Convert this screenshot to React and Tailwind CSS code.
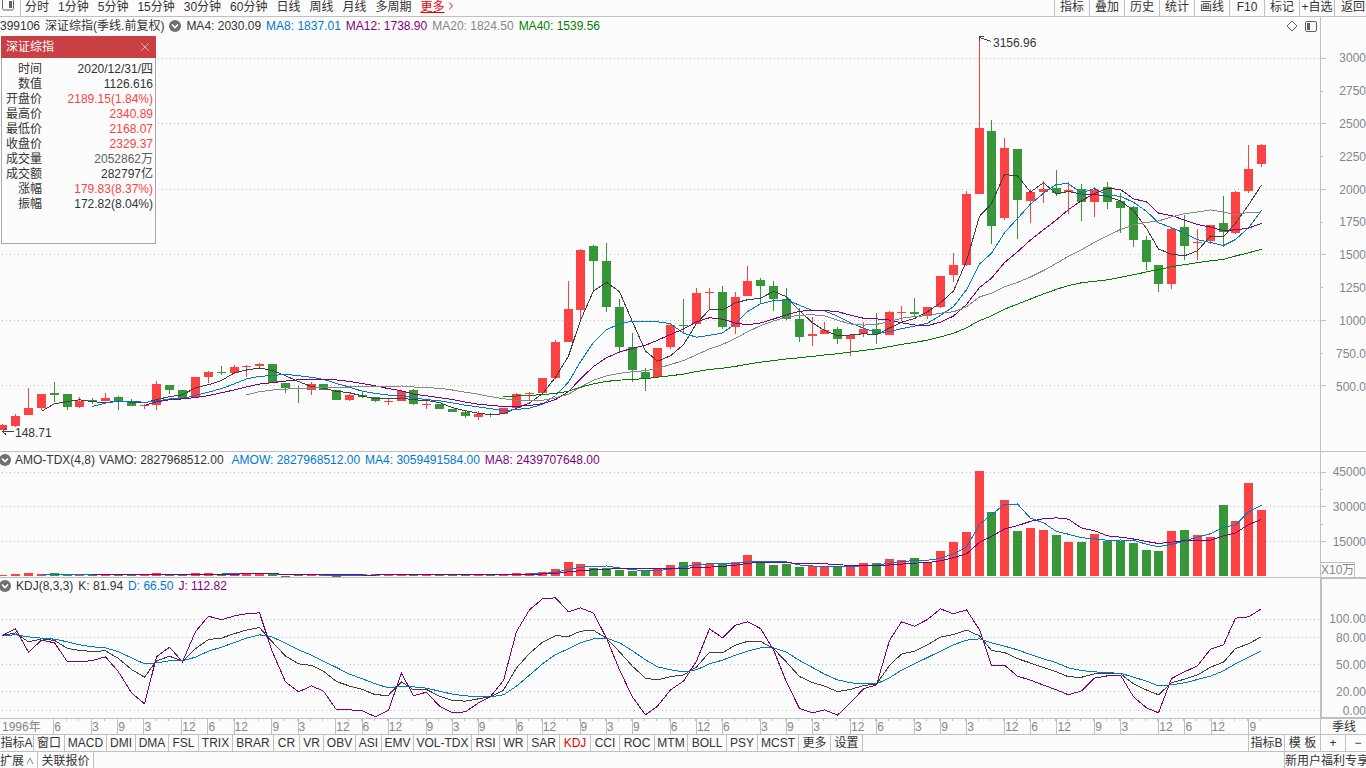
import React from "react";
import { ChevronRight, X } from "lucide-react";

const RED = "#fc4242";
const GREEN = "#379637";
const BLUE = "#0078d0";
const PURPLE = "#800080";
const DARK = "#404040";
const GRAY = "#868686";
const LINE = "#c0c0c0";

const PLOT_W = 1320;

// one row per quarter: direction, body top, body bottom, high, low
const candles = [
  ["r", 425, 430, 424, 430], ["r", 416, 426, 414, 427], ["r", 408, 415, 388, 415], ["r", 394, 408, 394, 410],
  ["g", 393, 395, 382, 402], ["g", 394, 407, 394, 410], ["r", 401, 407, 397, 408], ["g", 400, 402, 398, 404],
  ["r", 398, 401, 393, 401], ["g", 397, 401, 396, 410], ["g", 401, 406, 399, 406], ["r", 405, 406, 404, 409],
  ["r", 384, 405, 381, 410], ["g", 385, 390, 385, 394], ["g", 390, 398, 390, 398], ["r", 377, 397, 377, 398],
  ["r", 372, 377, 371, 383], ["g", 372, 373, 366, 375], ["r", 367, 373, 365, 374], ["r", 366, 367, 365, 377],
  ["r", 364, 366, 363, 368], ["g", 364, 383, 364, 383], ["g", 383, 388, 383, 393], ["g", 388, 389, 386, 403],
  ["r", 384, 390, 382, 395], ["g", 384, 390, 384, 390], ["g", 390, 400, 390, 400], ["r", 395, 400, 394, 401],
  ["g", 395, 397, 391, 398], ["g", 397, 401, 397, 402], ["r", 401, 402, 399, 405], ["r", 391, 401, 390, 401],
  ["g", 390, 404, 389, 405], ["r", 404, 405, 400, 409], ["g", 404, 409, 404, 409], ["g", 409, 412, 409, 412],
  ["g", 412, 416, 410, 418], ["r", 414, 417, 411, 420], ["g", 414, 415, 413, 417], ["r", 408, 414, 408, 414],
  ["r", 394, 408, 393, 408], ["r", 393, 394, 392, 401], ["r", 378, 393, 378, 393], ["r", 342, 378, 340, 379],
  ["r", 309, 342, 281, 342], ["r", 250, 310, 249, 320], ["g", 246, 261, 245, 292], ["g", 261, 307, 243, 312],
  ["g", 307, 347, 299, 351], ["g", 347, 370, 333, 382], ["g", 372, 378, 368, 391], ["r", 348, 377, 348, 377],
  ["r", 325, 347, 324, 349], ["g", 325, 326, 299, 333], ["r", 293, 324, 288, 324], ["r", 292, 293, 288, 310],
  ["g", 292, 327, 286, 329], ["r", 297, 327, 292, 334], ["r", 281, 296, 266, 296], ["g", 280, 286, 278, 303],
  ["g", 286, 299, 281, 311], ["g", 299, 319, 288, 320], ["g", 319, 337, 308, 342], ["r", 334, 336, 317, 346],
  ["r", 330, 334, 322, 334], ["g", 329, 339, 327, 344], ["r", 335, 339, 334, 356], ["r", 329, 334, 322, 337],
  ["g", 329, 334, 313, 344], ["r", 312, 335, 311, 335], ["r", 312, 313, 306, 321], ["g", 312, 314, 298, 317],
  ["r", 307, 316, 307, 319], ["r", 276, 307, 276, 308], ["r", 265, 275, 253, 282], ["r", 194, 265, 191, 266],
  ["r", 128, 194, 37, 194], ["g", 131, 226, 120, 244], ["r", 148, 218, 138, 220], ["g", 149, 200, 149, 239],
  ["r", 192, 201, 190, 223], ["r", 189, 192, 181, 203], ["g", 188, 193, 170, 196], ["r", 190, 192, 182, 214],
  ["g", 189, 202, 184, 221], ["r", 190, 202, 187, 217], ["g", 187, 202, 182, 209], ["g", 201, 208, 193, 233],
  ["g", 207, 240, 206, 247], ["g", 240, 262, 236, 270], ["g", 265, 284, 265, 292], ["r", 229, 284, 227, 289],
  ["g", 227, 246, 215, 260], ["r", 242, 243, 229, 260], ["r", 225, 241, 225, 244], ["g", 223, 232, 196, 247],
  ["r", 192, 233, 191, 234], ["r", 169, 191, 145, 193], ["r", 145, 164, 144, 167],
];

const volumes = [
  575, 574, 573, 574, 573, 574, 574, 574, 574, 574, 574, 575, 573, 574, 574, 573, 573, 574, 573, 573,
  573, 574, 576, 574, 574, 574, 576, 574, 574, 574, 574, 574, 574, 574, 574, 574, 574, 574, 574, 574,
  573, 573, 572, 569, 562, 564, 568, 568, 570, 571, 571, 568, 565, 562, 562, 564, 564, 562, 555, 562,
  565, 564, 567, 566, 566, 566, 566, 563, 563, 559, 560, 558, 562, 551, 542, 532, 471, 512, 500, 531,
  528, 530, 535, 542, 542, 534, 541, 541, 543, 550, 551, 531, 530, 535, 537, 505, 521, 483, 510,
];

// D and J in thirds of a pixel, K follows from J = 3K - 2D
const kdjJ = [
  555, 535, 605, 569, 577, 634, 634, 630, 619, 664, 727, 760, 619, 590, 634, 543, 497, 508, 496, 490,
  487, 605, 694, 724, 706, 722, 778, 778, 781, 799, 779, 668, 736, 725, 767, 787, 784, 757, 738, 690,
  543, 478, 445, 442, 484, 472, 488, 563, 658, 740, 793, 767, 718, 692, 632, 535, 562, 524, 514, 534,
  598, 695, 774, 787, 778, 794, 757, 715, 703, 570, 514, 527, 507, 475, 490, 478, 538, 646, 644, 677,
  689, 704, 718, 733, 721, 683, 676, 674, 739, 772, 787, 684, 664, 646, 596, 583, 503, 499, 475,
];
const kdjD = [
  555, 553, 559, 563, 566, 574, 583, 589, 592, 604, 622, 640, 637, 631, 631, 620, 602, 590, 576, 563,
  553, 560, 578, 598, 614, 632, 651, 671, 685, 700, 712, 707, 709, 713, 722, 731, 736, 739, 739, 733,
  707, 674, 640, 612, 595, 577, 565, 563, 577, 601, 628, 649, 658, 664, 658, 640, 629, 614, 602, 592,
  592, 605, 630, 651, 671, 688, 697, 700, 700, 682, 659, 640, 621, 602, 583, 569, 565, 577, 587, 598,
  612, 625, 637, 652, 660, 664, 667, 668, 680, 692, 706, 703, 697, 687, 677, 661, 640, 620, 601,
];
const kdjK = kdjJ.map((j, i) => (j + 2 * kdjD[i]) / 3);

const xAt = (i) => Math.floor(2.86 + 12.8448 * i);

const closes = candles.map(([dir, top, bottom]) => (dir === "r" ? top : bottom));

function average(values, n) {
  return values.map((_, i) =>
    i < n - 1 ? null : values.slice(i - n + 1, i + 1).reduce((a, b) => a + b, 0) / n
  );
}

function points(values) {
  return values
    .map((v, i) => (v === null ? null : `${xAt(i) + 0.5},${v + 0.5}`))
    .filter(Boolean)
    .join(" ");
}

function Curve({ values, color }) {
  return <polyline points={points(values)} fill="none" stroke={color} strokeWidth="1" />;
}

function GridLines({ rows }) {
  return rows.map((y) => (
    <line key={y} x1="2" x2={PLOT_W} y1={y + 0.5} y2={y + 0.5} stroke={LINE} strokeDasharray="1 3" />
  ));
}

function Plot({ top, height, className, children }) {
  return (
    <svg
      className={`block w-full ${className}`}
      viewBox={`0 ${top} ${PLOT_W} ${height}`}
      preserveAspectRatio="none"
      shapeRendering="crispEdges"
      aria-hidden="true"
    >
      {children}
    </svg>
  );
}

function AxisTicks({ top, height, major, minor, className }) {
  return (
    <svg className={`absolute left-0 top-0 w-[6px] ${className}`} viewBox={`0 ${top} 6 ${height}`} shapeRendering="crispEdges">
      {major.map((y) => <rect key={y} x="0" y={y} width="5" height="1" fill={LINE} />)}
      {minor.map((y) => <rect key={y} x="0" y={y} width="2" height="1" fill={LINE} />)}
    </svg>
  );
}

function Toggle({ label }) {
  return (
    <button aria-label={label} className="shrink-0">
      <svg className="block h-3 w-3" viewBox="0 0 12 12">
        <circle cx="6" cy="6" r="6" fill="#707070" />
        <path d="M3 4.5 6 7.5 9 4.5" fill="none" stroke="#fff" strokeWidth="1.6" />
      </svg>
    </button>
  );
}

const periods = ["分时", "1分钟", "5分钟", "15分钟", "30分钟", "60分钟", "日线", "周线", "月线", "多周期"];
const tools = ["指标", "叠加", "历史", "统计", "画线", "F10", "标记", "+自选"];

function Toolbar() {
  return (
    <header className="flex h-[17px] items-start overflow-hidden border-b border-[#c0c0c0] leading-[14px]">
      <button aria-label="侧栏" className="flex h-4 w-[21px] shrink-0 items-start border-r border-[#c0c0c0] pl-[2px]">
        <svg className="block h-[11px] w-3" viewBox="0 0 12 11">
          <rect x="0.5" y="-1" width="11" height="11" rx="1.5" fill="none" stroke="#606060" />
          <rect x="7" y="1" width="3" height="7" fill="#606060" />
        </svg>
      </button>
      <nav className="ml-1 flex gap-[9px] whitespace-nowrap">
        {periods.map((p) => <button key={p}>{p}</button>)}
        <button className="flex text-[#e60000]">
          <span className="underline underline-offset-1">更多</span>
          <ChevronRight className="h-3 w-3" strokeWidth={2} />
        </button>
      </nav>
      <div className="ml-auto flex h-4 items-start whitespace-nowrap">
        {tools.map((t) => (
          <button key={t} className="flex h-4 w-[35px] items-start justify-center border-l border-[#c0c0c0]">
            {t}
          </button>
        ))}
        <button className="flex h-4 w-8 items-start overflow-hidden border-l border-[#c0c0c0] pl-[6px]">返回</button>
      </div>
    </header>
  );
}

const quote = [
  ["时间", "2020/12/31/四", "text-[#333]"],
  ["数值", "1126.616", "text-[#333]"],
  ["开盘价", "2189.15(1.84%)", "text-[#fc4242]"],
  ["最高价", "2340.89", "text-[#fc4242]"],
  ["最低价", "2168.07", "text-[#fc4242]"],
  ["收盘价", "2329.37", "text-[#fc4242]"],
  ["成交量", "2052862万", "text-[#606060]"],
  ["成交额", "282797亿", "text-[#333]"],
  ["涨幅", "179.83(8.37%)", "text-[#fc4242]"],
  ["振幅", "172.82(8.04%)", "text-[#333]"],
];

function QuoteBox() {
  return (
    <section className="absolute left-px top-[19px] h-[208px] w-[155px] border border-[#a8a8a8] bg-[#fcfcfc]">
      <div className="-mx-px -mt-px flex h-[22px] items-center justify-between bg-[#c84044] pl-[5px] pr-1 text-white">
        <h2>深证综指</h2>
        <button aria-label="关闭"><X className="h-[14px] w-[14px]" strokeWidth={1} /></button>
      </div>
      <table className="mt-1 w-full">
        <tbody>
          {quote.map(([label, value, color]) => (
            <tr key={label} className="h-[15px]">
              <th className="w-10 p-0 text-right font-normal leading-[15px]">{label}</th>
              <td className={`p-0 pr-[2px] text-right leading-[15px] ${color}`}>{value}</td>
            </tr>
          ))}
        </tbody>
      </table>
    </section>
  );
}

const priceLabels = ["3000", "2750", "2500", "2250", "2000", "1750", "1500", "1250", "1000", "750.0", "500.0"];

function PricePane() {
  return (
    <section className="flex h-[435px] border-b border-[#c0c0c0]">
      <div className="relative min-w-0 flex-1">
        <Plot top={17} height={434} className="h-[434px]">
          <GridLines rows={[58, 123, 189, 254, 320, 385]} />
          {candles.map(([dir, top, bottom, high, low], i) => (
            <g key={i} fill={dir === "r" ? RED : GREEN}>
              <rect x={xAt(i)} y={high} width="1" height={low - high} />
              <rect x={xAt(i) - 4} y={top} width="9" height={bottom - top} />
            </g>
          ))}
          <Curve values={average(closes, 4)} color={DARK} />
          <Curve values={average(closes, 8)} color={BLUE} />
          <Curve values={average(closes, 12)} color={PURPLE} />
          <Curve values={average(closes, 20)} color={GRAY} />
          <Curve values={average(closes, 40)} color="#008000" />
          <path d="M991 41.5 980 37.5M984 36.5H979.5V41" fill="none" stroke={DARK} />
          <path d="M14 431.5H2.5M6 428.5 2.5 431.5 6 434.5" fill="none" stroke={DARK} />
        </Plot>
        <span className="absolute top-[19px] leading-[14px]" style={{ left: `${(993 / PLOT_W) * 100}%` }}>3156.96</span>
        <span className="absolute left-[15px] top-[409px] leading-[14px]">148.71</span>
        <div className="absolute left-0 right-[3px] top-px flex h-4 items-center gap-[5px] whitespace-nowrap">
          <span>399106</span>
          <span>深证综指(季线.前复权)</span>
          <Toggle label="主图指标" />
          <span>MA4: 2030.09</span>
          <span className="text-[#0078d0]">MA8: 1837.01</span>
          <span className="text-[#800080]">MA12: 1738.90</span>
          <span className="text-[#868686]">MA20: 1824.50</span>
          <span className="text-[#008000]">MA40: 1539.56</span>
          <button aria-label="标注" className="ml-auto">
            <svg className="block h-3 w-3" viewBox="0 0 12 12" fill="none" stroke="#606060">
              <path d="M6 1 11 6 6 11 1 6Z" />
            </svg>
          </button>
          <button aria-label="面板" className="ml-[2px]">
            <svg className="block h-3 w-3" viewBox="0 0 12 12">
              <rect x="0.5" y="1.5" width="11" height="10" rx="1.5" fill="none" stroke="#606060" />
              <rect x="2" y="3" width="3" height="7" fill="#606060" />
            </svg>
          </button>
        </div>
        <QuoteBox />
      </div>
      <div className="relative w-[46px] shrink-0 border-l border-[#c0c0c0] pt-[25px] text-right text-[#868686]">
        <AxisTicks
          top={17} height={434} className="h-[434px]"
          major={[58, 123, 189, 254, 320, 385]} minor={[91, 156, 222, 287, 353]}
        />
        <div className="flex h-[361px] flex-col">
          {priceLabels.map((p) => <span key={p} className="flex flex-1 items-center justify-end">{p}</span>)}
        </div>
      </div>
    </section>
  );
}

function AmountPane() {
  return (
    <section className="flex h-[126px] border-b border-[#c0c0c0]">
      <div className="relative min-w-0 flex-1">
        <Plot top={452} height={125} className="h-[125px]">
          <GridLines rows={[472, 506, 541]} />
          {volumes.map((y, i) => (
            <rect key={i} x={xAt(i) - 4} y={y} width="9" height={Math.max(576 - y, 1)} fill={candles[i][0] === "r" ? RED : GREEN} />
          ))}
          <Curve values={average(volumes, 4)} color={BLUE} />
          <Curve values={average(volumes, 8)} color={PURPLE} />
        </Plot>
        <div className="absolute -left-px top-0 flex h-4 items-center gap-1 whitespace-nowrap">
          <Toggle label="AMO-TDX" />
          <span>AMO-TDX(4,8)</span>
          <span>VAMO: 2827968512.00</span>
          <span className="ml-1 text-[#0078d0]">AMOW: 2827968512.00</span>
          <span className="ml-px text-[#0078d0]">MA4: 3059491584.00</span>
          <span className="ml-px text-[#800080]">MA8: 2439707648.00</span>
        </div>
      </div>
      <div className="relative flex w-[46px] shrink-0 flex-col border-l border-[#c0c0c0] pt-[3px] text-right text-[#868686]">
        <AxisTicks top={452} height={125} className="h-[125px]" major={[472, 506, 541]} minor={[489, 524]} />
        <span className="h-[35px] leading-[35px]">45000</span>
        <span className="h-[35px] leading-[35px]">30000</span>
        <span className="h-[35px] leading-[35px]">15000</span>
        <span className="mt-auto self-start whitespace-nowrap border-r border-t border-[#c0c0c0] leading-[14px]">X10万</span>
      </div>
    </section>
  );
}

function KdjPane() {
  const third = (values) => values.map((v) => 450 + v / 3);
  return (
    <section className="flex h-[141px] border-b border-[#c0c0c0]">
      <div className="relative min-w-0 flex-1">
        <Plot top={578} height={140} className="h-[140px]">
          <GridLines rows={[619, 637, 664, 691, 710]} />
          <Curve values={third(kdjK)} color={DARK} />
          <Curve values={third(kdjD)} color={BLUE} />
          <Curve values={third(kdjJ)} color={PURPLE} />
        </Plot>
        <div className="absolute -left-px top-0 flex h-4 items-center gap-[5px] whitespace-nowrap">
          <Toggle label="KDJ" />
          <span>KDJ(8,3,3)</span>
          <span>K: 81.94</span>
          <span className="text-[#0078d0]">D: 66.50</span>
          <span className="text-[#800080]">J: 112.82</span>
        </div>
      </div>
      <div className="flex w-[46px] shrink-0 flex-col border-b border-l-2 border-t border-[#c0c0c0] pt-8 text-right leading-4 text-[#868686]">
        <span>100.00</span>
        <span className="mt-[3px]">80.00</span>
        <span className="mt-[11px]">50.00</span>
        <span className="mt-[11px]">20.00</span>
        <span className="mt-[3px]">0.00</span>
      </div>
    </section>
  );
}

// [quarter index, month]
const months = [
  [4, 6], [7, 3], [9, 9], [11, 3], [14, 12], [16, 6], [18, 12], [21, 9], [23, 3], [26, 12],
  [28, 6], [30, 12], [33, 9], [35, 3], [37, 9], [40, 6], [42, 12], [45, 9], [47, 3], [49, 9],
  [52, 6], [54, 12], [56, 6], [59, 3], [61, 9], [63, 3], [66, 12], [68, 6], [71, 3], [73, 9],
  [75, 3], [78, 12], [80, 6], [82, 12], [85, 9], [87, 3], [90, 12], [92, 6], [94, 12], [97, 9],
];

function TimeAxis() {
  return (
    <div className="flex h-4 border-b border-[#c0c0c0] leading-4 text-[#868686]">
      <div className="relative flex min-w-0 flex-1">
        <svg className="absolute left-0 top-0 h-[3px] w-full" viewBox={`0 0 ${PLOT_W} 3`} preserveAspectRatio="none" shapeRendering="crispEdges">
          {candles.map((_, i) => i > 3 && <rect key={i} x={xAt(i) - 1} y="0" width="1" height="2" fill={LINE} />)}
        </svg>
        <span className="w-0 whitespace-nowrap pl-[2px]" style={{ flexGrow: xAt(4) - 1 }}>1996年</span>
        {months.map(([i, month], n) => {
          const end = n + 1 < months.length ? xAt(months[n + 1][0]) - 1 : PLOT_W;
          return (
            <span key={i} className="w-0 border-l border-[#c0c0c0]" style={{ flexGrow: end - xAt(i) + 1 }}>
              {month}
            </span>
          );
        })}
      </div>
      <span className="w-[46px] shrink-0 border-l border-[#c0c0c0] pl-[11px] text-[#333]">季线</span>
    </div>
  );
}

const indicators = [
  ["指标A", "w-[34px]"], ["窗口", "w-[31px]"], ["MACD", "w-[42px]"], ["DMI", "w-[29px]"], ["DMA", "w-[33px]"],
  ["FSL", "w-[30px]"], ["TRIX", "w-[34px]"], ["BRAR", "w-[41px]"], ["CR", "w-[26px]"], ["VR", "w-[24px]"],
  ["OBV", "w-[32px]"], ["ASI", "w-[26px]"], ["EMV", "w-[32px]"], ["VOL-TDX", "w-[58px]"], ["RSI", "w-[28px]"],
  ["WR", "w-[28px]"], ["SAR", "w-[32px]"], ["KDJ", "w-[31px]"], ["CCI", "w-[29px]"], ["ROC", "w-[35px]"],
  ["MTM", "w-[33px]"], ["BOLL", "w-[39px]"], ["PSY", "w-[31px]"], ["MCST", "w-[41px]"], ["更多", "w-[32px]"],
  ["设置", "w-[32px]"],
];

function IndicatorTabs() {
  return (
    <nav className="flex h-[17px] whitespace-nowrap border-b border-[#c0c0c0] leading-4">
      {indicators.map(([name, width]) => (
        <button
          key={name}
          className={`flex shrink-0 justify-center border-r border-[#c0c0c0] ${width} ${name === "KDJ" ? "text-[#e60000]" : ""}`}
        >
          {name}
        </button>
      ))}
      <button className="ml-auto flex w-[37px] justify-center border-x border-[#c0c0c0]">指标B</button>
      <button className="w-[35px]">模 板</button>
      <button className="w-[26px] border-x border-[#c0c0c0]">+</button>
      <button className="w-5 pl-1">−</button>
    </nav>
  );
}

export default function App() {
  return (
    <div className="w-full overflow-hidden bg-[#fcfcfc] font-['Liberation_Sans','Noto_Sans_CJK_SC',sans-serif] text-[12px] text-[#333]">
      <Toolbar />
      <PricePane />
      <AmountPane />
      <KdjPane />
      <TimeAxis />
      <IndicatorTabs />
      <footer className="flex h-4 whitespace-nowrap leading-[18px]">
        <button className="flex w-[38px] border-r border-[#c0c0c0]">
          扩展
          <svg className="ml-[2px] mt-[5px] h-2 w-2" viewBox="0 0 8 8" fill="none" stroke="#868686">
            <path d="M1 7 4 1 7 7" />
          </svg>
        </button>
        <button className="w-14 border-r border-[#c0c0c0]">关联报价</button>
        <a href="#" className="ml-auto w-[82px] overflow-hidden border-l border-[#c0c0c0]">新用户福利专享</a>
      </footer>
    </div>
  );
}
